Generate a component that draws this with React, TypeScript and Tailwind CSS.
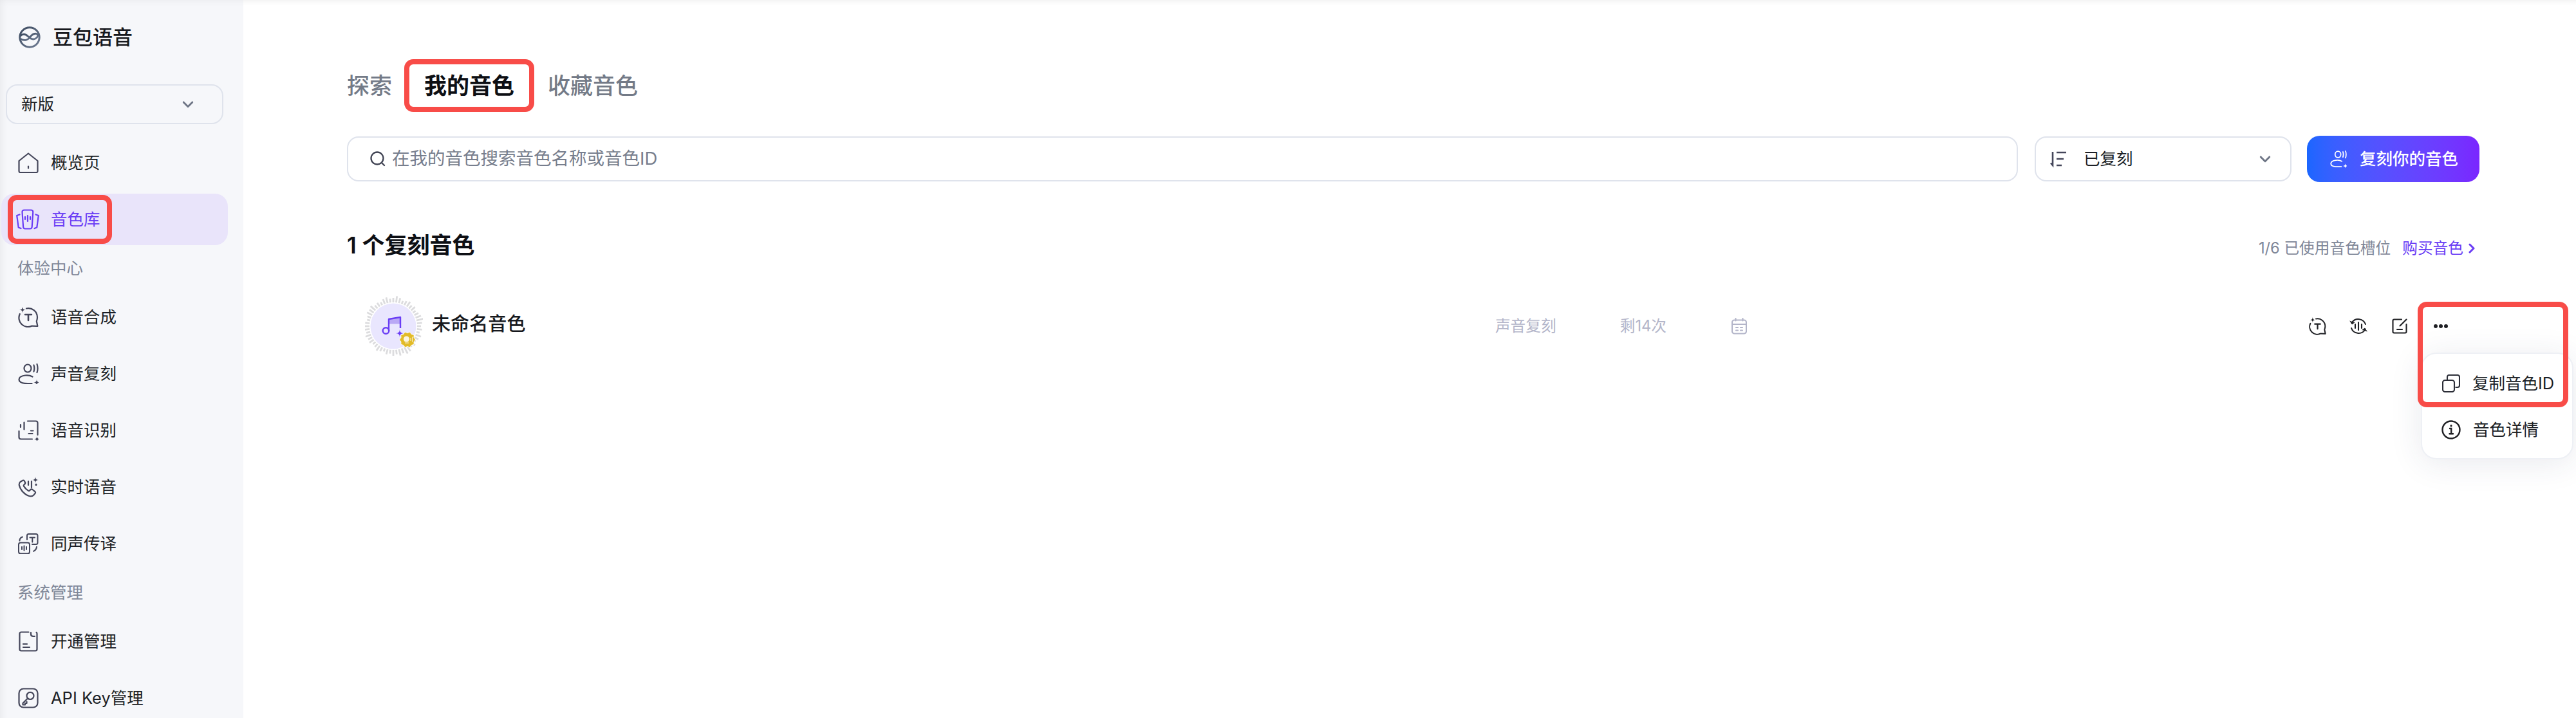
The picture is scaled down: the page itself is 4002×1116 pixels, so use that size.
import type { ReactNode } from 'react';

function star(x: number, y: number, r: number) {
  return `M${x} ${y - r}Q${x} ${y} ${x + r} ${y}Q${x} ${y} ${x} ${y + r}Q${x} ${y} ${x - r} ${y}Q${x} ${y} ${x} ${y - r}Z`;
}

function Icon({ children, className = 'w-8 h-8', sw = 2.2 }: { children: ReactNode; className?: string; sw?: number }) {
  return (
    <svg viewBox="0 0 32 32" fill="none" stroke="currentColor" strokeWidth={sw} strokeLinecap="round" strokeLinejoin="round" className={`${className} shrink-0`}>
      {children}
    </svg>
  );
}

const HomeIcon = () => (
  <Icon>
    <path d="M1.500 13 16 1.500 30.500 13v16c0 1.400-.8 2-2 2h-25c-1.200 0-2-.6-2-2z" />
    <path d="M16 21.500v3" />
  </Icon>
);

const LibraryIcon = () => (
  <Icon className="w-[38px] h-[32px]" sw={2.2}>
    <g transform="translate(-3 0)">
      <path d="M9.500 4.500c0-2 1-3 3-3h10.800c2 0 3 1 3 3l-1.600 23c-.1 2-1.200 3-3 3h-7.600c-1.800 0-2.900-1-3-3z" />
      <path d="M14 12v4M18 10v9M22 12v4" />
      <path d="M5.500 8.500 1.200 10l2.500 18.500 3.800 1.500" />
      <path d="M30.500 8.500 34.800 10l-2.500 18.500-3.800 1.500" />
    </g>
  </Icon>
);

const ChatTIcon = ({ className = 'w-8 h-8', sw = 2.2 }: { className?: string; sw?: number }) => (
  <Icon className={className} sw={sw}>
    <path d="M13 2.500A14 14 0 0 1 30 16c0 2.500-.5 4.500-1.200 6.300l1.600 7.700-8.800-.4A14 14 0 0 1 2.800 11" />
    <path d="M11 12h10M16 12v9" strokeWidth={sw + 0.4} />
    <path d={star(7, 4.500, 5)} fill="currentColor" stroke="none" />
  </Icon>
);

const VoiceIcon = ({ className = 'w-8 h-8', sw = 2.2 }: { className?: string; sw?: number }) => (
  <Icon className={className} sw={sw}>
    <ellipse cx="15" cy="7.500" rx="5.500" ry="6" />
    <path d="M24.500 2.500c1 3 1 7 0 10M29.500 1c1.300 4 1.300 9 0 13" />
    <path d="M22.500 20.500C19 18.500 15 18 11 18.500 5 19.300 1.500 22 1.500 25s3.500 5.500 9 5.800c4 .2 7.500 .2 11 .2" />
    <path d={star(29, 29.500, 5)} fill="currentColor" stroke="none" />
  </Icon>
);

const AsrIcon = () => (
  <Icon>
    <path d="M1.500 17v9.500c0 2 1 3 3 3h17.500M15 1.500h12.500c2 0 3 1 3 3v18.500" />
    <path d="M4 7v4M9.500 3.500v11" />
    <path d="M16.500 21h6M20 16.500h3.500" />
    <path d={star(29.500, 29.500, 5)} fill="currentColor" stroke="none" />
  </Icon>
);

const PhoneIcon = () => (
  <Icon>
    <path d="M3.500 8c-1.500 1.500-2 3.200-1.700 5 1.500 7.500 8.500 15 15.500 17 2.300.7 5 .6 7-1.500l2-2.400c.9-1.100.8-2.400-.2-3.300l-3.600-2.800c-1.100-.8-2.300-.7-3.300.2l-1.200 1.200c-.6.6-1.400.7-2.200.2-2.700-1.600-5.300-4.300-6.800-7-.4-.8-.3-1.500.3-2.100l1.100-1.100c1-1 1.100-2.200.3-3.300L9.800 6.500c-.9-1-2.300-1.100-3.300-.2z" />
    <path d="M16 7v6M21 7v10" />
    <path d="M28 12v.5" strokeWidth={3} />
    <path d={star(27, 5, 5)} fill="currentColor" stroke="none" />
  </Icon>
);

const TranslateIcon = () => (
  <Icon sw={2}>
    <rect x="1" y="14.500" width="17" height="17" rx="3" />
    <path d="M6 21v4M9.500 19.500v7M13 21v4" />
    <path d="M14 9.500V3.500c0-1.500 1-2.500 2.500-2.500H28c1.500 0 2.500 1 2.500 2.500v11c0 1.500-1 2.500-2.500 2.500h-6" />
    <path d="M18.500 6.500h7.500M22.300 6.500v7" />
    <path d="M2.500 11.500c0-3 1.500-5 4.500-6M29 21c-.5 3.500-2 5.500-5 6.800" />
  </Icon>
);

const PlanIcon = () => (
  <Icon>
    <path d="M16.500 1.500H5c-1.700 0-2.500.8-2.500 2.500v24c0 1.700.8 2.500 2.500 2.500h22c1.700 0 2.500-.8 2.500-2.500V4c0-1-.3-1.700-1-2.200" />
    <path d="M20 2v2.500c0 2 1.500 3.500 3.500 3.500H26" />
    <path d="M8 20h6M8 25h10" />
  </Icon>
);

const KeyIcon = () => (
  <Icon>
    <rect x="1.500" y="1.500" width="29" height="29" rx="7" />
    <circle cx="19" cy="12.500" r="5.500" />
    <path d="M15 16.500 7.500 24v2.500h3.500V24h2.500v-2.500" />
  </Icon>
);

const SortIcon = () => (
  <svg viewBox="0 0 26 28" fill="none" stroke="#44465a" strokeWidth={2.600} className="w-[26px] h-[28px] shrink-0">
    <path d="M4 3v21L1 20.500" />
    <path d="M10 4h15M10 14h11M10 24h8" />
  </svg>
);

const Chevron = () => (
  <svg viewBox="0 0 20 14" fill="none" stroke="#6f7686" strokeWidth={3.200} strokeLinecap="round" strokeLinejoin="round" className="w-[18px] h-[13px]">
    <path d="M2.500 3 10 10.500 17.500 3" />
  </svg>
);

const SearchIcon = () => (
  <svg viewBox="0 0 24 26" fill="none" stroke="#3f4252" strokeWidth={2.300} strokeLinecap="round" className="w-[24px] h-[26px] shrink-0">
    <circle cx="11" cy="12" r="9.500" />
    <path d="m19 20 3 3" />
  </svg>
);

const WaveLoopIcon = () => (
  <svg viewBox="0 0 28 28" fill="none" stroke="currentColor" strokeWidth={2.100} strokeLinecap="round" className="w-[28px] h-[28px] shrink-0">
    <path d="M4 8A12 12 0 0 1 25 11" />
    <path d="M24 20A12 12 0 0 1 3 17" />
    <path d="M1 6l3 5 4-3" fill="currentColor" strokeWidth={1} />
    <path d="M27 22l-3-5-4 3" fill="currentColor" strokeWidth={1} />
    <path d="M9 11v6M14 8v12M19 11v6" />
  </svg>
);

const EditIcon = () => (
  <svg viewBox="0 0 24 24" fill="none" stroke="currentColor" strokeWidth={2.100} strokeLinecap="round" strokeLinejoin="round" className="w-[24px] h-[24px] shrink-0">
    <path d="M15 1.500H3.500c-1.300 0-2 .7-2 2v17c0 1.300.7 2 2 2h17c1.300 0 2-.7 2-2V9" />
    <path d="m12.500 11.500 10-10" />
    <path d="M8 17h8" />
  </svg>
);

const CalendarIcon = () => (
  <svg viewBox="0 0 24 26" fill="none" stroke="#b3b5c9" strokeWidth={2.100} strokeLinecap="round" className="w-[24px] h-[26px] shrink-0">
    <rect x="1" y="3.500" width="22" height="21" rx="3.500" />
    <path d="M1 10h22M6.500 1v3.500M17.500 1v3.500" />
    <path d="M7 15h3M14 15h3M7 19.500h3M14 19.500h3" />
  </svg>
);

const CopyIcon = () => (
  <svg viewBox="0 0 28 28" fill="none" stroke="#2c2e38" strokeWidth={2.100} strokeLinejoin="round" className="w-[28px] h-[28px] shrink-0">
    <rect x="1" y="9" width="18" height="18" rx="3.500" />
    <path d="M8 8V4c0-1.800 1.200-3 3-3h13c1.800 0 3 1.200 3 3v13c0 1.800-1.200 3-3 3h-3.500" />
  </svg>
);

const InfoIcon = () => (
  <svg viewBox="0 0 30 30" fill="none" stroke="#1f2024" strokeWidth={2.400} strokeLinecap="round" className="w-[30px] h-[30px] shrink-0">
    <circle cx="15" cy="15" r="13.500" />
    <path d="M15 8.500v.5" strokeWidth={3} />
    <path d="M13 13h2.200v8M12.500 21.200h5.500" />
  </svg>
);

function Logo() {
  return (
    <svg viewBox="0 0 34 34" fill="none" className="w-[34px] h-[34px] shrink-0">
      <defs>
        <linearGradient id="lg" x1="0" y1="0" x2="1" y2="1">
          <stop offset="0" stopColor="#3c4a5f" />
          <stop offset="1" stopColor="#6e7b92" />
        </linearGradient>
      </defs>
      <circle cx="17" cy="17" r="15.200" stroke="url(#lg)" strokeWidth={3} />
      <path d="M2.500 15c4-4 8-3.500 12 .5s9 6 13 2.500c3-2.500 3-5.500 0-6.500-4-1.200-8 2.500-11 6.500-2.500 3.200-8 5-13.500 1.500" stroke="url(#lg)" strokeWidth={2.800} />
    </svg>
  );
}

const spikes = [6, 8, 5, 9, 7, 5, 8, 6, 10, 11, 8, 10, 7, 9, 6, 8, 5, 7, 9, 6, 5, 8, 7, 9, 6, 10, 8, 7, 5, 6, 9, 8, 10, 6, 7, 5, 8, 9, 6, 7, 10, 8, 5, 7, 9, 6, 8, 5, 7, 9, 11, 8];

const badgePoints = Array.from({ length: 20 }, (_, i) => {
  const a = (i / 20) * Math.PI * 2;
  const r = i % 2 === 0 ? 12.5 : 10.5;
  return `${66 + Math.cos(a) * r},${68 + Math.sin(a) * r}`;
}).join(' ');

function Avatar() {
  return (
    <svg viewBox="0 0 90 94" fill="none" className="w-[90px] h-[94px] shrink-0">
      {spikes.map((len, i) => {
        const a = (i / spikes.length) * Math.PI * 2;
        return (
          <line
            key={i}
            x1={44 + Math.cos(a) * 37}
            y1={47 + Math.sin(a) * 37}
            x2={44 + Math.cos(a) * (37 + len)}
            y2={47 + Math.sin(a) * (37 + len)}
            stroke="#dcdcde"
            strokeWidth={2.800}
          />
        );
      })}
      <circle cx="44" cy="47" r="35.500" fill="#e9e6fe" />
      <path d="M37 36 55 33v10.500H37z" fill="#b9a8f5" />
      <path d="M37 54V36l18-3v17" stroke="#6a3df5" strokeWidth={2.400} strokeLinejoin="round" />
      <circle cx="32.500" cy="54" r="4.800" stroke="#6a3df5" strokeWidth={2.400} />
      <path d={star(54, 58, 6)} fill="#6a3df5" />
      <polygon points={badgePoints} fill="#e2bb28" stroke="#fff" strokeWidth={0.800} />
      <circle cx="64.500" cy="67" r="4.500" fill="#fff" opacity="0.85" />
      <path d="M62 73h6M71 65v5M73.500 63.500v8" stroke="#fff" strokeWidth={1} opacity="0.8" />
    </svg>
  );
}

function NavRow({ icon, label, active }: { icon: ReactNode; label: string; active?: boolean }) {
  return (
    <div className={`relative h-20 flex items-center rounded-[20px] ml-[2px] w-[352px] pl-[26px] gap-[19px] text-[25.5px] ${active ? 'bg-[#e9e4fa] text-[#6a3df5]' : 'text-[#1c1f26]'}`}>
      <span className={`w-8 flex justify-center ${active ? 'text-[#6a3df5]' : 'text-[#44465a]'}`}>{icon}</span>
      <span>{label}</span>
      {active && <div className="absolute left-[10px] top-[2px] w-[162px] h-[76px] border-8 border-[#f84c48] rounded-[14px]" />}
    </div>
  );
}

function SectionLabel({ text }: { text: string }) {
  return <div className="h-[72px] flex items-center pl-[27px] text-[25.5px] text-[#7f8798]">{text}</div>;
}

function Sidebar() {
  return (
    <aside className="w-[378px] shrink-0 bg-[#f6f7fa] shadow-[inset_12px_10px_14px_-12px_rgba(0,0,0,0.08)]">
      <div className="h-[114px] pt-[41px] pl-[29px] flex items-start gap-[19px]">
        <Logo />
        <span className="text-[31px] leading-[34px] font-medium text-[#16181d]">豆包语音</span>
      </div>
      <div className="mt-[17px] ml-[9px] w-[338px] h-[62px] border-2 border-[#dfe3ec] rounded-[18px] flex items-center justify-between pl-[22px] pr-[44px] text-[25.5px] text-[#1c1f26]">
        新版
        <Chevron />
      </div>
      <div className="mt-5 flex flex-col gap-2">
        <NavRow icon={<HomeIcon />} label="概览页" />
        <NavRow icon={<LibraryIcon />} label="音色库" active />
      </div>
      <SectionLabel text="体验中心" />
      <div className="flex flex-col gap-2">
        <NavRow icon={<ChatTIcon />} label="语音合成" />
        <NavRow icon={<VoiceIcon />} label="声音复刻" />
        <NavRow icon={<AsrIcon />} label="语音识别" />
        <NavRow icon={<PhoneIcon />} label="实时语音" />
        <NavRow icon={<TranslateIcon />} label="同声传译" />
      </div>
      <SectionLabel text="系统管理" />
      <div className="flex flex-col gap-2">
        <NavRow icon={<PlanIcon />} label="开通管理" />
        <NavRow icon={<KeyIcon />} label="API Key管理" />
      </div>
    </aside>
  );
}

function MoreMenu() {
  return (
    <div className="relative w-[22px] h-[22px] ml-[41px] flex items-center justify-between">
      <span className="w-[6px] h-[6px] rounded-full bg-[#1f2024]" />
      <span className="w-[6px] h-[6px] rounded-full bg-[#1f2024]" />
      <span className="w-[6px] h-[6px] rounded-full bg-[#1f2024]" />
      <div className="absolute left-[-20px] top-[52px] w-[237px] h-[166px] bg-white border-2 border-[#eef0f5] rounded-[24px] shadow-[0_6px_50px_rgba(40,50,90,0.10)] pt-[10px]">
        <div className="h-[72px] pl-[31px] flex items-center gap-[19px] text-[25.5px] text-[#1c1f26] whitespace-nowrap">
          <CopyIcon />
          复制音色ID
        </div>
        <div className="h-[72px] pl-[30px] flex items-center gap-[19px] text-[25.5px] text-[#1c1f26] whitespace-nowrap">
          <InfoIcon />
          音色详情
        </div>
      </div>
      <div className="absolute left-[-25px] top-[-27px] w-[234px] h-[164px] border-8 border-[#f84c48] rounded-[14px]" />
    </div>
  );
}

export default function App() {
  return (
    <div className="w-[4002px] h-[1116px] overflow-hidden flex bg-white font-['Inter','Noto_Sans_CJK_SC',sans-serif]">
      <Sidebar />
      <main className="flex-1 pt-[92px] pl-[161px] pr-[150px] shadow-[inset_0_10px_10px_-10px_rgba(0,0,0,0.10)]">
        <div className="flex items-center h-[82px] text-[35px] font-medium text-[#737a87]">
          <span className="w-[89px]">探索</span>
          <span className="h-[82px] px-[23px] flex items-center border-8 border-[#f84c48] rounded-[14px] text-[#0d0f14] font-semibold">我的音色</span>
          <span className="ml-[21px]">收藏音色</span>
        </div>

        <div className="mt-[37px] flex items-center">
          <div className="flex-1 h-[70px] border-2 border-[#dfe3ec] rounded-[18px] flex items-center pl-[34px] gap-[10px] text-[27.5px] text-[#777e8d]">
            <SearchIcon />
            在我的音色搜索音色名称或音色ID
          </div>
          <div className="ml-[26px] w-[399px] h-[70px] border-2 border-[#dfe3ec] rounded-[18px] flex items-center pl-[22px] pr-[30px] text-[25.5px] text-[#1c1f26]">
            <SortIcon />
            <span className="ml-[26px] flex-1">已复刻</span>
            <Chevron />
          </div>
          <button className="ml-[24px] w-[268px] h-[72px] rounded-[20px] bg-linear-to-r from-[#1a66ff] to-[#7a26ff] flex items-center pl-[36px] gap-[20px] text-[25.5px] font-medium text-white">
            <VoiceIcon className="w-[26px] h-[28px]" sw={2.2} />
            复刻你的音色
          </button>
        </div>

        <div className="mt-[74px] h-[48px] flex items-center justify-between">
          <h2 className="text-[35px] font-semibold text-[#0d0f14]">1 个复刻音色</h2>
          <div className="flex items-center pt-[10px] pr-[7px] text-[23.7px] text-[#7f8798]">
            1/6 已使用音色槽位
            <span className="ml-[18px] text-[#6a3df5]">购买音色</span>
            <svg viewBox="0 0 10 16" fill="none" stroke="#6a3df5" strokeWidth={3} strokeLinecap="round" strokeLinejoin="round" className="ml-[8px] w-[10px] h-[16px]">
              <path d="M2 2l6 6-6 6" />
            </svg>
          </div>
        </div>

        <div className="mt-[56px] h-[92px] flex items-center pl-[28px] text-[23.7px] text-[#b3b5c9]">
          <Avatar />
          <span className="ml-[14px] -mt-[6px] flex-1 text-[29.1px] font-medium text-[#16181d]">未命名音色</span>
          <span>声音复刻</span>
          <span className="ml-[99px]">剩14次</span>
          <span className="ml-[101px]"><CalendarIcon /></span>
          <div className="ml-[873px] mr-[49px] flex items-center text-[#1f2024]">
            <ChatTIcon className="w-[27px] h-[28px]" sw={2.3} />
            <span className="ml-[36px]"><WaveLoopIcon /></span>
            <span className="ml-[38px]"><EditIcon /></span>
            <MoreMenu />
          </div>
        </div>
      </main>
    </div>
  );
}
